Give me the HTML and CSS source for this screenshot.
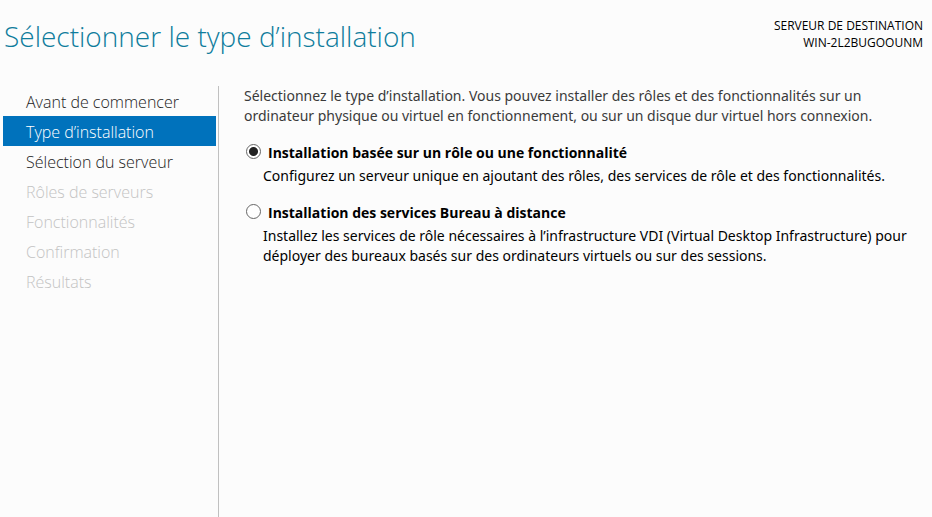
FILE: index.html
```html
<!DOCTYPE html>
<html lang="fr">
<head>
<meta charset="utf-8">
<title>Sélectionner le type d’installation</title>
<link rel="stylesheet" href="styles.css">
</head>
<body>
<header class="header">
  <h1 class="title">Sélectionner le type d’installation</h1>
  <p class="destination">SERVEUR DE DESTINATION<br>WIN-2L2BUGOOUNM</p>
</header>
<div class="wizard">
  <nav class="steps">
    <a class="step" href="#">Avant de commencer</a>
    <a class="step current" href="#" aria-current="step">Type d’installation</a>
    <a class="step" href="#">Sélection du serveur</a>
    <a class="step disabled" aria-disabled="true">Rôles de serveurs</a>
    <a class="step disabled" aria-disabled="true">Fonctionnalités</a>
    <a class="step disabled" aria-disabled="true">Confirmation</a>
    <a class="step disabled" aria-disabled="true">Résultats</a>
  </nav>
  <main class="content">
    <p class="intro">Sélectionnez le type d’installation. Vous pouvez installer des rôles et des fonctionnalités sur un<br>ordinateur physique ou virtuel en fonctionnement, ou sur un disque dur virtuel hors connexion.</p>
    <div class="option">
      <input class="radio" type="radio" name="type" id="role" checked>
      <label class="option-title" for="role">Installation basée sur un rôle ou une fonctionnalité</label>
      <p class="option-text">Configurez un serveur unique en ajoutant des rôles, des services de rôle et des fonctionnalités.</p>
    </div>
    <div class="option">
      <input class="radio" type="radio" name="type" id="rds">
      <label class="option-title" for="rds">Installation des services Bureau à distance</label>
      <p class="option-text">Installez les services de rôle nécessaires à l’infrastructure VDI (Virtual Desktop Infrastructure) pour<br>déployer des bureaux basés sur des ordinateurs virtuels ou sur des sessions.</p>
    </div>
  </main>
</div>
</body>
</html>
```
FILE: styles.css
```css
* { box-sizing: border-box; }
body {
  margin: 0;
  min-height: 100vh;
  display: flex;
  flex-direction: column;
  background: #fcfcfc;
  color: #000;
  font: 14px/20px "Noto Sans", "Open Sans", sans-serif;
}
h1, p { margin: 0; }
.header {
  display: flex;
  justify-content: space-between;
  min-height: 86px;
  padding: 17px 9px 0 4px;
}
.title {
  font-family: "Open Sans", sans-serif;
  font-size: 28px;
  line-height: 38px;
  font-weight: 300;
  color: #0f7c9c;
}
.destination {
  font-family: "Open Sans", sans-serif;
  font-size: 12px;
  line-height: 17px;
  text-align: right;
}
.wizard { display: flex; flex: 1; }
.steps {
  width: 219px;
  flex: none;
  padding: 0 2px 0 3px;
  border-right: 1px solid #c0c0c0;
}
.step {
  display: block;
  padding: 2px 0 0 23px;
  font-family: "Open Sans", sans-serif;
  font-size: 16px;
  line-height: 28px;
  font-weight: 300;
  color: #222;
  text-decoration: none;
}
.current { background: #0072bc; color: #fff; }
.disabled { color: #c3c3c3; }
.content { flex: 1; padding: 0 8px 0 25px; white-space: nowrap; }
.intro { color: #3a3a3a; margin-bottom: 17px; }
.option {
  display: grid;
  grid-template-columns: 19px 1fr;
  row-gap: 3px;
  margin-bottom: 17px;
}
.radio {
  appearance: none;
  width: 15px;
  height: 15px;
  margin: 1px 0 0 2px;
  border: 1px solid #666;
  border-radius: 50%;
  background: #fff;
}
.radio:checked { background: radial-gradient(circle, #222 0 4px, #fff 5px); }
.option-title { font-family: "Open Sans", sans-serif; font-weight: 700; padding-left: 5px; }
.option-text { grid-column: 2; }
```
